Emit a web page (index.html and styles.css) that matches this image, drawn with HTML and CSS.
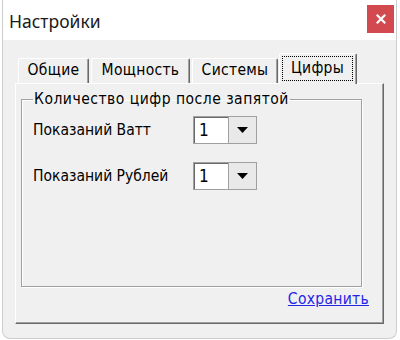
FILE: index.html
```html
<!DOCTYPE html>
<html lang="ru">
<head>
<meta charset="utf-8">
<title>Настройки</title>
<link rel="stylesheet" href="styles.css">
</head>
<body>
<div class="window">
  <div class="titlebar">
    <span class="title">Настройки</span>
    <button class="close" aria-label="Закрыть">
      <svg width="10" height="10" viewBox="0 0 10 10"><path d="M1.5 1.5 L8.5 8.5 M8.5 1.5 L1.5 8.5" stroke="#fff" stroke-width="2.2" stroke-linecap="square"/></svg>
    </button>
  </div>
  <div class="client">
    <div class="tabs">
      <div class="tab tab-general">Общие</div>
      <div class="tab tab-power">Мощность</div>
      <div class="tab tab-systems">Системы</div>
      <div class="tab tab-digits active"><span class="focus">Цифры</span></div>
    </div>
    <div class="panel">
      <fieldset class="group">
        <legend>Количество цифр после запятой</legend>
        <div class="row">
          <span class="label">Показаний Ватт</span>
          <div class="combo"><span class="value">1</span><span class="drop"><svg width="11" height="6" viewBox="0 0 11 6"><path d="M0 0 H11 L5.5 6 Z" fill="#000"/></svg></span></div>
        </div>
        <div class="row">
          <span class="label">Показаний Рублей</span>
          <div class="combo"><span class="value">1</span><span class="drop"><svg width="11" height="6" viewBox="0 0 11 6"><path d="M0 0 H11 L5.5 6 Z" fill="#000"/></svg></span></div>
        </div>
      </fieldset>
      <div class="actions"><a href="#" class="link">Сохранить</a></div>
    </div>
  </div>
</div>
</body>
</html>
```

FILE: styles.css
```css
* { box-sizing: border-box; }
body {
  margin: 0;
  background: #ffffff;
  font-family: "DejaVu Sans Condensed", "DejaVu Sans", sans-serif;
  font-size: 15.5px;
  color: #000;
}
.window {
  width: 395px;
  height: 339px;
  margin-left: 2px;
  border: 1px solid #cdcdcd;
  border-top: none;
  border-radius: 0 0 8px 8px;
  background: #f0f0f0;
  overflow: hidden;
}
.titlebar {
  height: 40px;
  background: #ffffff;
  display: flex;
  align-items: center;
  padding: 0 2px 0 6px;
}
.title {
  font-family: "Noto Sans", "Open Sans", sans-serif;
  font-size: 17.5px;
  color: #1b1b1b;
  margin-top: 2px;
}
.close {
  margin-left: auto;
  width: 27px;
  height: 28px;
  margin-top: -2px;
  border: none;
  background: #d2494f;
  display: flex;
  align-items: center;
  justify-content: center;
  padding: 0;
}
.client {
  padding: 12px 0 0 12px;
}
.tabs {
  display: flex;
  align-items: flex-end;
  height: 32px;
  padding-left: 3px;
  margin-bottom: -1px;
  position: relative;
  z-index: 1;
}
.tab {
  height: 25px;
  line-height: 23px;
  margin-right: 2px;
  text-align: center;
  letter-spacing: 0.3px;
  border-top: 1px solid #ffffff;
  border-left: 1px solid #ffffff;
  border-right: 1px solid #696969;
  box-shadow: inset -1px 0 0 #a0a0a0;
  border-radius: 2px 2px 0 0;
  margin-bottom: 1px;
  white-space: nowrap;
}
.tab-general { width: 71px; }
.tab-power { width: 99px; }
.tab-systems { width: 86px; }
.tab-digits { width: 78px; }
.tab.active {
  height: 31px;
  margin-bottom: 0;
  margin-left: -1px;
  padding: 2px 3px 0 2px;
  background: #f0f0f0;
  line-height: normal;
}
.focus {
  display: block;
  border: 1px dotted #000;
  padding: 2px 0 3px;
  line-height: 18px;
}
.panel {
  width: 369px;
  height: 241px;
  border-top: 1px solid #ffffff;
  border-left: 1px solid #ffffff;
  border-right: 1px solid #696969;
  border-bottom: 1px solid #696969;
  box-shadow: inset -1px -1px 0 #a0a0a0;
  padding: 6px 21px 0 5px;
}
.group {
  margin: 0;
  height: 197px;
  border: 1px solid #a0a0a0;
  box-shadow: 1px 1px 0 #ffffff, inset 1px 1px 0 #ffffff;
  padding: 8px 10px 0 11px;
}
.group legend {
  padding: 0 1px;
  line-height: 18px;
  letter-spacing: 0.5px;
}
.row {
  display: flex;
  align-items: center;
  height: 28px;
  margin-bottom: 18px;
}
.label {
  width: 160px;
}
.combo {
  width: 64px;
  height: 28px;
  display: flex;
  border: 1px solid #a0a0a0;
  box-shadow: inset 1px 1px 0 #696969;
  background: #ffffff;
}
.value {
  flex: 1;
  padding: 3px 0 0 5px;
  font-size: 17px;
}
.drop {
  width: 28px;
  background: #e9e9e9;
  border-left: 1px solid #a0a0a0;
  display: flex;
  align-items: center;
  justify-content: center;
}
.actions {
  text-align: right;
  padding: 3px 0 0 0;
  margin-right: -7px;
}
.link {
  color: #2424e8;
  text-decoration: underline;
  letter-spacing: 0.3px;
}
```
